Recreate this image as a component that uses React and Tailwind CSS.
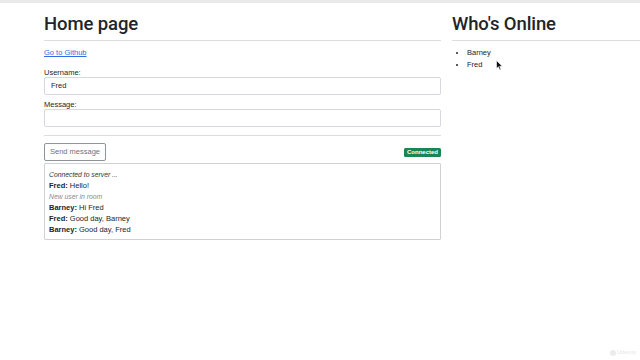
export default function App() {
  const font = { fontFamily: '"Liberation Sans", Arial, sans-serif' };
  const head = { fontFamily: 'Roboto, "Liberation Sans", Arial, sans-serif' };
  return (
    <div className="relative w-[640px] h-[360px] overflow-hidden bg-white text-[#212529]" style={font}>
      <div className="h-[3px] bg-[#e9e9e9]" />
      <div className="flex pl-[44px] gap-[11px]">
        {/* Left column */}
        <div className="w-[397px] shrink-0">
          <h1 className="mt-[10px] text-[18.5px] leading-[22px] font-medium tracking-[-0.1px] pb-[5px] border-b border-[#dddddd]" style={head}>
            Home page
          </h1>
          <a href="#" className="block mt-[6px] text-[7.5px] leading-[12px] text-[#2f6de0] underline">
            Go to Github
          </a>
          <div className="mt-[9px] text-[7.5px] leading-[9px]">Username:</div>
          <div className="h-[18px] border border-[#d5d8dc] rounded-[2px] flex items-center px-[6px] text-[7.5px]">
            Fred
          </div>
          <div className="mt-[5px] text-[7.5px] leading-[9px]">Message:</div>
          <div className="h-[18px] border border-[#d5d8dc] rounded-[2px]" />
          <div className="mt-[8px] border-t border-[#dddddd]" />
          <div className="mt-[7px] flex items-center justify-between">
            <button className="h-[18px] w-[62px] border border-[#8f9499] rounded-[2px] text-[7.5px] text-[#6c757d] bg-white">
              Send message
            </button>
            <span className="bg-[#198754] text-white font-bold text-[6px] leading-[9px] px-[3px] rounded-[1.5px] mt-[1px]">
              Connected
            </span>
          </div>
          <div className="mt-[2px] border border-[#cfd2d5] rounded-[1px] pt-[5px] pb-[4px] px-[4px] text-[7.5px] leading-[11px]">
            <div className="italic text-[6.8px] text-[#333]">Connected to server ...</div>
            <div><b>Fred:</b> Hello!</div>
            <div className="italic text-[6.8px] text-[#8a8a8a]">New user in room</div>
            <div><b>Barney:</b> Hi Fred</div>
            <div><b>Fred:</b> Good day, Barney</div>
            <div><b>Barney:</b> Good day, Fred</div>
          </div>
        </div>
        {/* Right column */}
        <div className="w-[193px] shrink-0">
          <h2 className="mt-[10px] text-[18.5px] leading-[22px] font-medium tracking-[-0.1px] pb-[5px] border-b border-[#dddddd]" style={head}>
            Who's Online
          </h2>
          <ul className="mt-[6px] list-disc pl-[15px] text-[7.5px] leading-[11.5px]">
            <li>Barney</li>
            <li>Fred</li>
          </ul>
        </div>
      </div>
      {/* mouse cursor */}
      <svg className="absolute left-[496px] top-[60px]" width="7" height="11" viewBox="0 0 7 11">
        <path d="M0.5 0.5 L0.5 8.5 L2.4 6.8 L3.8 10 L5 9.4 L3.7 6.3 L6.2 6.2 Z" fill="#111" stroke="#fff" strokeWidth="0.6" />
      </svg>
      {/* watermark */}
      <div className="absolute left-[610px] top-[348px] flex items-center gap-[1px] text-[6px] text-[#e6e6e6]">
        <span className="w-[6px] h-[6px] rounded-full bg-[#ececec]" />
        <span>Udemy</span>
      </div>
    </div>
  );
}
